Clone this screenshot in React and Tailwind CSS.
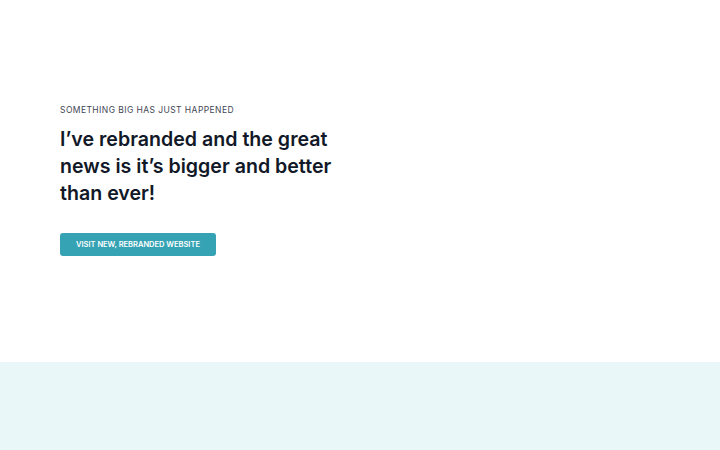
export default function App() {
  return (
    <div className="min-h-[450px] w-full bg-white" style={{ fontFamily: "Inter, 'Liberation Sans', sans-serif" }}>
      <section className="h-[362px] px-[60px] pt-[105px]">
        <p className="text-[8.5px] leading-[11px] tracking-[0.05em] text-[#3f4654] uppercase">Something big has just happened</p>
        <h1 className="mt-[10px] w-[290px] text-[19.6px] font-semibold leading-[27px] text-[#111827]">
          I’ve rebranded and the great news is it’s bigger and better than ever!
        </h1>
        <a
          href="#"
          className="mt-[26px] inline-flex h-[23px] w-[156px] items-center justify-center rounded-[3px] bg-[#35a3b4] text-[7.5px] font-semibold uppercase text-white"
        >
          Visit new, rebranded website
        </a>
      </section>
      <section className="h-[88px] bg-[#e9f7f8]" />
    </div>
  );
}
